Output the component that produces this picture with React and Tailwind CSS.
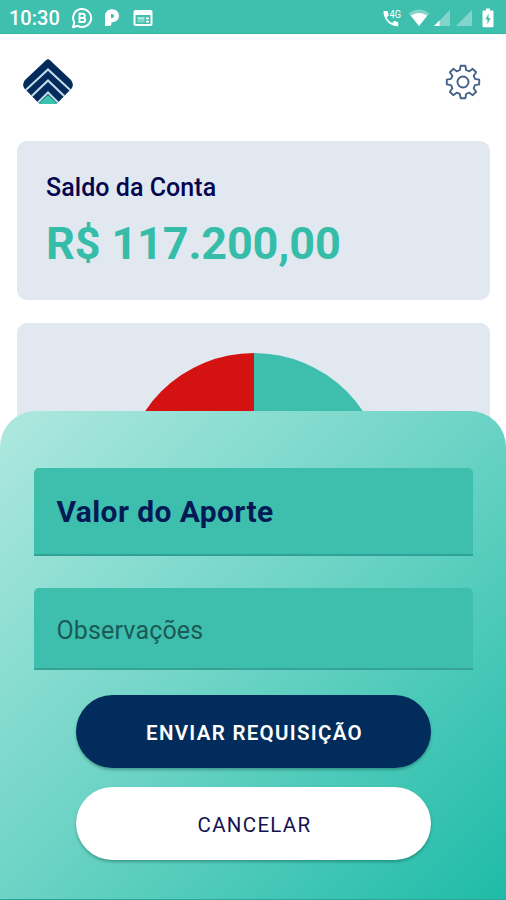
import React from 'react';

// 8-tooth cog outline centred on 0,0
const gearPath = () => {
  let d = '';
  for (let i = 0; i < 8; i++) {
    const a = (i * Math.PI) / 4;
    const p = (x, y) =>
      `${(x * Math.cos(a) - y * Math.sin(a)).toFixed(2)} ${(x * Math.sin(a) + y * Math.cos(a)).toFixed(2)}`;
    d += `${i === 0 ? 'M' : 'L'}${p(-3.1, -12)} L${p(-2.4, -16.2)} L${p(2.4, -16.2)} L${p(3.1, -12)} Q${p(4.7, -11.2)} ${p(6.3, -10.7)} `;
  }
  return d + 'Z';
};

function StatusBar() {
  return (
    <div className="flex h-[34px] items-center justify-between border-b border-[#35b5a4] bg-[#3fbfae] pt-[2px] pr-[11px] pl-[9px] text-white">
      <div className="flex items-center">
        <span className="w-[62px] text-[20px] leading-none font-medium">10:30</span>
        <svg width="22" height="22" viewBox="0 0 22 22" fill="none" stroke="white" strokeWidth="2">
          <path d="M2 20.2 3.3 15.4A9 9 0 1 1 6.7 18.8Z" strokeLinejoin="round" />
          <path d="M8.5 6.8h3.2a2 2 0 0 1 0 4.1H8.5zM8.5 10.9h3.6a2.1 2.1 0 0 1 0 4.2H8.5z" />
        </svg>
        <svg className="ml-[11px]" width="16" height="20" viewBox="0 0 16 20">
          <path
            fillRule="evenodd"
            fill="white"
            d="M1 8C1 4 4 1.2 8 1.2S15 4 15 7.7c0 4-3 6.5-7.5 6.5v1.300A2.500 2.500 0 0 1 5 18H1zM7 6v4.200c2 0 3-.8 3-2.200S9 6 7 6z"
          />
        </svg>
        <svg className="ml-[13px]" width="20" height="18" viewBox="0 0 20 18">
          <rect x="1.5" y="2" width="17" height="14" rx="1" fill="none" stroke="white" strokeWidth="2" />
          <path d="M1.5 2h17v4h-17z" fill="white" />
          <path d="M4.5 9h7v4.5h-7z" fill="white" fillOpacity="0.35" />
          <path d="M4.5 8.5h7v1h-7zM13 8.5h3v1.8h-3zM13 11.8h3v1.8h-3z" fill="white" />
        </svg>
      </div>
      <div className="flex items-center">
        <svg width="22" height="22" viewBox="0 0 22 22">
          <path
            d="M1.5 4h4l1.3 4.3-2.2 2.3c1.3 2.6 3 4.2 5.5 5.5l2.2-2.3 3.9 1.4v4.1C8.5 19.8 1.2 12.500 1.500 4z"
            fill="white"
          />
          <text x="7.5" y="10.5" fontSize="10.5" fill="white" textLength="11.5" lengthAdjust="spacingAndGlyphs">4G</text>
        </svg>
        <svg className="ml-[4px]" width="22" height="18" viewBox="0 0 22 18">
          <path d="M.5 4.500C7-.8 15-.8 21.500 4.500L11 17z" fill="white" fillOpacity="0.35" />
          <path d="M2.800 6.600C8 3.200 14 3.200 19.200 6.600L11 17z" fill="white" />
        </svg>
        <svg className="ml-[3px]" width="18" height="18" viewBox="0 0 18 18">
          <path d="M17 1v16H1z" fill="white" fillOpacity="0.35" />
          <path d="M6.500 11.500V17H1z" fill="white" />
        </svg>
        <svg className="ml-[4px]" width="18" height="18" viewBox="0 0 18 18">
          <path d="M17 1v16H1z" fill="white" fillOpacity="0.35" />
        </svg>
        <svg className="ml-[8px]" width="14" height="20" viewBox="0 0 14 20">
          <path d="M5 .5h4v2h2.500a1 1 0 0 1 1 1V18a1.200 1.200 0 0 1-1.200 1.200H2.700A1.200 1.200 0 0 1 1.500 18V3.500a1 1 0 0 1 1-1H5z" fill="white" />
          <path d="M7.500 5.500 4.500 11.500H6.500V16.300L9.500 10H7.500z" fill="#3fbfae" />
        </svg>
      </div>
    </div>
  );
}

function Logo() {
  return (
    <svg className="mt-px" width="52" height="46" viewBox="0 0 52 46">
      <clipPath id="logo-shape">
        <path d="M24 1.200Q26 -.6 28 1.200L49 21Q52.500 25.500 49.500 29.500L37 42.500Q34.500 45 32 45H20Q17.500 45 15 42.500L2.500 29.500Q-.5 25.500 3 21Z" />
      </clipPath>
      <g clipPath="url(#logo-shape)">
        <rect width="52" height="46" fill="#032b5c" />
        <g fill="none" stroke="#c3dceb" strokeWidth="2.1">
          <path d="M0 34.500 26 10.500 52 34.500" />
          <path d="M3 43.500 26 21.500 49 43.500" />
          <path d="M12 47.500 26 33.500 40 47.500" />
        </g>
        <path d="M14.500 46.500 26 36 37.500 46.500z" fill="#3bc4ad" />
      </g>
    </svg>
  );
}

export default function App() {
  return (
    <div className="relative h-[900px] w-[506px] overflow-hidden bg-white font-['Roboto',sans-serif]">
      <StatusBar />

      <header className="flex h-[107px] items-center justify-between pr-[25px] pb-[12px] pl-[22px]">
        <Logo />
        <svg width="36" height="36" viewBox="-18 -18 36 36" fill="none" stroke="#44628a" strokeWidth="1.9" strokeLinejoin="round">
          <path d={gearPath()} />
          <circle r="5.5" />
        </svg>
      </header>

      <main className="flex flex-col gap-[23px] pr-[16px] pl-[17px]">
        <section className="h-[159px] rounded-[10px] bg-[#e2e8f0] pt-[31px] pl-[29px]">
          <h1 className="text-[25px] leading-[32px] font-medium tracking-[0.05px] text-[#04064f]">Saldo da Conta</h1>
          <p className="mt-[13px] text-[45px] leading-[54px] font-bold tracking-[-0.15px] text-[#35bda9]">R$ 117.200,00</p>
        </section>
        <section className="flex h-[320px] justify-center rounded-[10px] bg-[#e2e8f0] pt-[30px]">
          <svg width="262" height="262" viewBox="-131 -131 262 262">
            <path d="M0 0V-131A131 131 0 0 0 0 131z" fill="#d51212" />
            <path d="M0 0V-131A131 131 0 0 1 0 131z" fill="#3ebfae" />
          </svg>
        </section>
      </main>

      {/* Bottom sheet */}
      <div className="absolute inset-x-0 bottom-0 flex h-[489px] flex-col items-center rounded-t-[36px] border-b border-[#2aa897] bg-linear-135/srgb from-[#afe8df] via-[#6bd3c5] to-[#1fbba8] pt-[57px]">
        <div className="flex h-[88px] w-[439px] items-center rounded-t-[5px] border-b-2 border-[#2fa297] bg-[#3ebfae] px-[23px]">
          <span className="text-[30px] font-bold tracking-[0.4px] text-[#041a55]">Valor do Aporte</span>
        </div>
        <div className="mt-[32px] flex h-[82px] w-[439px] items-center rounded-t-[5px] border-b-2 border-[#35a396] bg-[#3ebfae] px-[23px] pt-[6px]">
          <span className="text-[25px] tracking-[0.15px] text-[#1a5b58]">Observações</span>
        </div>
        <button className="mt-[25px] h-[73px] w-[355px] rounded-full bg-[#022c5c] pt-[3px] pl-[3px] text-[20.5px] font-semibold tracking-[1.3px] text-white shadow-[0_2px_3px_rgba(0,60,50,0.35)]">
          ENVIAR REQUISIÇÃO
        </button>
        <button className="mt-[19px] h-[73px] w-[355px] rounded-full bg-white pt-[3px] pl-[3px] text-[20.5px] tracking-[1.3px] text-[#14124f] shadow-[0_2px_3px_rgba(0,60,50,0.35)]">
          CANCELAR
        </button>
      </div>
    </div>
  );
}
